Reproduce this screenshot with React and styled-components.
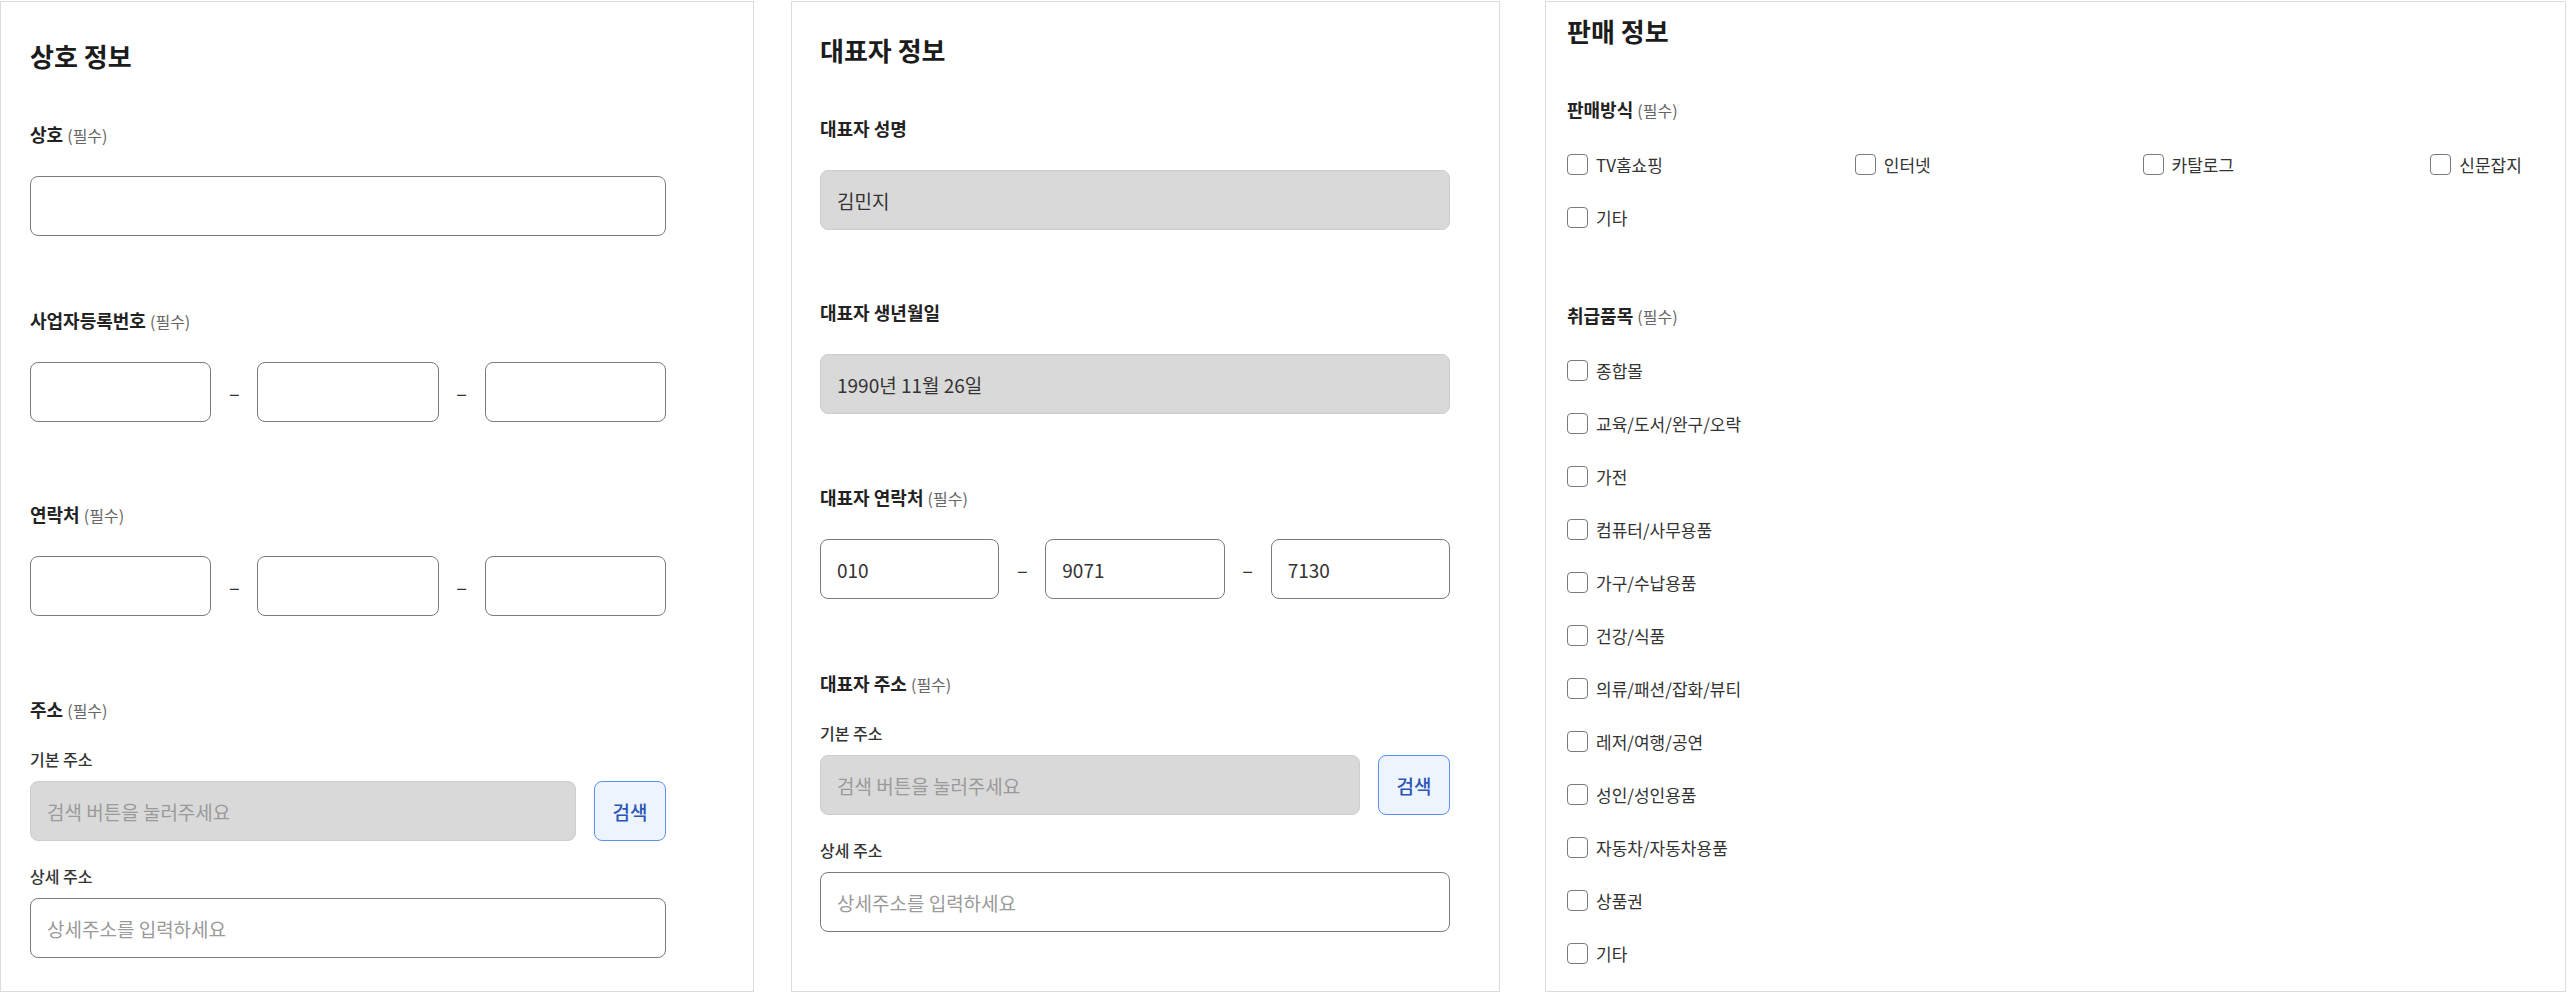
import React from 'react';
import styled, { createGlobalStyle } from 'styled-components';

const GlobalStyle = createGlobalStyle`
  * {
    box-sizing: border-box;
  }
  body {
    margin: 0;
    background: #fff;
    font-family: "Noto Sans CJK KR", "Noto Sans", sans-serif;
    color: #222;
  }
`;

const Page = styled.div`
  display: flex;
  align-items: flex-start;
  height: 993px;
  padding-top: 1px;
  overflow: hidden;
`;

const Panel = styled.section`
  display: flex;
  flex-direction: column;
  flex-shrink: 0;
  width: ${(p) => p.$width}px;
  height: 991px;
  margin-left: ${(p) => p.$offset || 0}px;
  padding: ${(p) => p.$pt}px ${(p) => p.$pr}px 0 ${(p) => p.$pl}px;
  border: 1px solid #dcdcdc;
  background: #fff;
`;

const Title = styled.h2`
  margin: 0;
  height: 32px;
  font-size: 26px;
  line-height: 32px;
  font-weight: 700;
  color: #1c1c1c;
`;

const Field = styled.div`
  display: flex;
  flex-direction: column;
  margin-top: ${(p) => p.$gap}px;
`;

const Label = styled.div`
  height: 24px;
  margin-bottom: ${(p) => p.$mb || 30}px;
  font-size: 18px;
  line-height: 24px;
  font-weight: 700;
  color: #222;
  white-space: nowrap;
`;

const Required = styled.span`
  font-size: 16px;
  line-height: 1;
  font-weight: 400;
  color: #666;
`;

const SubGroup = styled.div`
  display: flex;
  flex-direction: column;
  gap: 25px;
`;

const SubField = styled.div`
  display: flex;
  flex-direction: column;
  gap: 12px;
`;

const SubLabel = styled.div`
  height: 20px;
  font-size: 16px;
  line-height: 20px;
  font-weight: 500;
  color: #333;
`;

const Input = styled.input`
  width: 100%;
  height: 60px;
  padding: 0 16px;
  border: 1px solid ${(p) => (p.$muted ? '#cdcdcd' : '#7b7b7b')};
  border-radius: 8px;
  background: ${(p) => (p.$muted ? '#d9d9d9' : '#fff')};
  font-family: inherit;
  font-size: 19px;
  color: #333;
  outline: none;

  &::placeholder {
    color: #9a9a9a;
  }
`;

const SplitRow = styled.div`
  display: grid;
  grid-template-columns: 1fr 46px 1fr 46px 1fr;
  align-items: center;
`;

const Dash = styled.span`
  text-align: center;
  font-size: 20px;
  color: #333;
`;

const SearchRow = styled.div`
  display: grid;
  grid-template-columns: 1fr 72px;
  column-gap: 18px;
`;

const SearchButton = styled.button`
  height: 60px;
  border: 1.5px solid #5b8ff0;
  border-radius: 8px;
  background: #eef4fe;
  font-family: inherit;
  font-size: 19px;
  font-weight: 500;
  color: #2c56b5;
  cursor: pointer;
`;

const CheckGrid = styled.div`
  display: grid;
  grid-template-columns: repeat(4, 1fr);
  column-gap: 175px;
  row-gap: 32px;
`;

const CheckList = styled.div`
  display: flex;
  flex-direction: column;
  gap: 32px;
`;

const CheckItem = styled.label`
  display: flex;
  align-items: center;
  gap: 8px;
  height: 21px;
  font-size: 17px;
  line-height: 21px;
  color: #333;
  white-space: nowrap;
`;

const CheckBox = styled.input`
  appearance: none;
  flex-shrink: 0;
  width: 21px;
  height: 21px;
  margin: 0;
  border: 1px solid #7b7b7b;
  border-radius: 4px;
  background: #fff;
`;

const SplitInput = ({ values = ['', '', ''] }) => (
  <SplitRow>
    <Input defaultValue={values[0]} />
    <Dash>–</Dash>
    <Input defaultValue={values[1]} />
    <Dash>–</Dash>
    <Input defaultValue={values[2]} />
  </SplitRow>
);

const AddressFields = () => (
  <SubGroup>
    <SubField>
      <SubLabel>기본 주소</SubLabel>
      <SearchRow>
        <Input $muted readOnly placeholder="검색 버튼을 눌러주세요" />
        <SearchButton type="button">검색</SearchButton>
      </SearchRow>
    </SubField>
    <SubField>
      <SubLabel>상세 주소</SubLabel>
      <Input placeholder="상세주소를 입력하세요" />
    </SubField>
  </SubGroup>
);

const sellMethods = ['TV홈쇼핑', '인터넷', '카탈로그', '신문잡지', '기타'];

const products = [
  '종합몰',
  '교육/도서/완구/오락',
  '가전',
  '컴퓨터/사무용품',
  '가구/수납용품',
  '건강/식품',
  '의류/패션/잡화/뷰티',
  '레저/여행/공연',
  '성인/성인용품',
  '자동차/자동차용품',
  '상품권',
  '기타',
];

const App = () => {
  return (
    <>
      <GlobalStyle />
      <Page>
        <Panel $width={754} $pt={38} $pl={29} $pr={87}>
          <Title>상호 정보</Title>
          <Field $gap={50}>
            <Label>
              상호 <Required>(필수)</Required>
            </Label>
            <Input />
          </Field>
          <Field $gap={72}>
            <Label>
              사업자등록번호 <Required>(필수)</Required>
            </Label>
            <SplitInput />
          </Field>
          <Field $gap={80}>
            <Label>
              연락처 <Required>(필수)</Required>
            </Label>
            <SplitInput />
          </Field>
          <Field $gap={81}>
            <Label $mb={28}>
              주소 <Required>(필수)</Required>
            </Label>
            <AddressFields />
          </Field>
        </Panel>

        <Panel $width={709} $offset={37} $pt={32} $pl={28} $pr={49}>
          <Title>대표자 정보</Title>
          <Field $gap={50}>
            <Label>대표자 성명</Label>
            <Input $muted readOnly defaultValue="김민지" />
          </Field>
          <Field $gap={70}>
            <Label>대표자 생년월일</Label>
            <Input $muted readOnly defaultValue="1990년 11월 26일" />
          </Field>
          <Field $gap={71}>
            <Label>
              대표자 연락처 <Required>(필수)</Required>
            </Label>
            <SplitInput values={['010', '9071', '7130']} />
          </Field>
          <Field $gap={72}>
            <Label $mb={28}>
              대표자 주소 <Required>(필수)</Required>
            </Label>
            <AddressFields />
          </Field>
        </Panel>

        <Panel $width={1021} $offset={45} $pt={13} $pl={21} $pr={22}>
          <Title>판매 정보</Title>
          <Field $gap={50}>
            <Label $mb={33}>
              판매방식 <Required>(필수)</Required>
            </Label>
            <CheckGrid>
              {sellMethods.map((name) => (
                <CheckItem key={name}>
                  <CheckBox type="checkbox" />
                  {name}
                </CheckItem>
              ))}
            </CheckGrid>
          </Field>
          <Field $gap={75}>
            <Label $mb={33}>
              취급품목 <Required>(필수)</Required>
            </Label>
            <CheckList>
              {products.map((name, i) => (
                <CheckItem key={i}>
                  <CheckBox type="checkbox" />
                  {name}
                </CheckItem>
              ))}
            </CheckList>
          </Field>
        </Panel>
      </Page>
    </>
  );
};

export default App;
